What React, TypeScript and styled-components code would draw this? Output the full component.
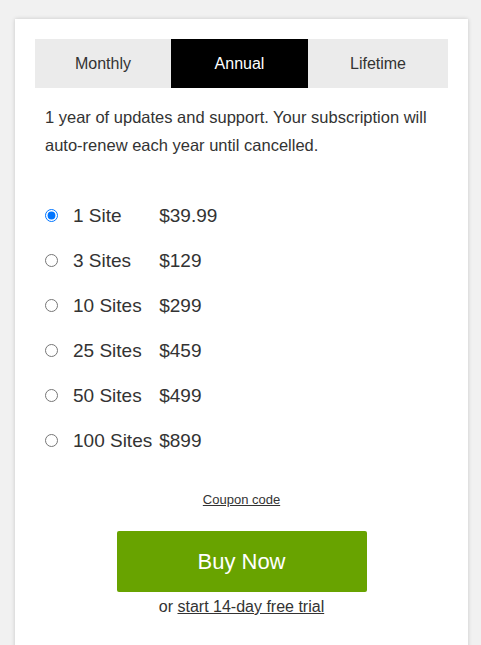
import React, { useState } from "react";
import styled, { createGlobalStyle } from "styled-components";

const Global = createGlobalStyle`
  html, body { margin: 0; padding: 0; background: #f1f1f1; }
  body { font-family: "Liberation Sans", Arial, sans-serif; color: #333; }
`;

const Page = styled.div`
  padding: 19px 13px 0 15px;
`;

const Card = styled.div`
  background: #fff;
  box-shadow: 0 0 4px rgba(0, 0, 0, 0.18);
  padding: 20px 20px 40px;
`;

const Tabs = styled.div`
  display: grid;
  grid-template-columns: 136fr 137fr 140fr;
  background: #ebebeb;
`;

const Tab = styled.button<{ $active?: boolean }>`
  height: 49px;
  border: 0;
  margin: 0;
  padding: 0;
  font-family: "Liberation Sans", Arial, sans-serif;
  font-size: 16px;
  background: ${(p) => (p.$active ? "#000" : "transparent")};
  color: ${(p) => (p.$active ? "#fff" : "#333")};
  cursor: pointer;
`;

const Description = styled.p`
  margin: 15px 0 0;
  padding: 0 10px;
  font-size: 16.5px;
  line-height: 28px;
`;

const Options = styled.table`
  margin: 34px 0 0 10px;
  border-collapse: collapse;
  font-size: 19px;
`;

const Row = styled.tr`
  height: 45px;
`;

const RadioCell = styled.td`
  padding: 0 15px 0 0;
  width: 13px;
  vertical-align: middle;
  line-height: 0;
`;

const Radio = styled.input`
  margin: 0;
  width: 13px;
  height: 13px;
`;

const LabelCell = styled.td`
  padding: 0 7px 0 0;
  white-space: nowrap;
  vertical-align: middle;
`;

const PriceCell = styled.td`
  padding: 0;
  vertical-align: middle;
`;

const Footer = styled.div`
  display: flex;
  flex-direction: column;
  align-items: center;
  margin-top: 27px;
`;

const Coupon = styled.a`
  font-size: 13px;
  line-height: 20px;
  color: #333;
  text-decoration: underline;
`;

const BuyButton = styled.button`
  margin-top: 21px;
  width: 250px;
  height: 61px;
  border: 0;
  border-radius: 2px;
  background: #68a300;
  color: #fff;
  font-family: "Liberation Sans", Arial, sans-serif;
  font-size: 22px;
  cursor: pointer;
`;

const Trial = styled.div`
  margin-top: 5px;
  font-size: 16px;
  line-height: 20px;
  a { color: #333; text-decoration: underline; }
`;

const plans = [
  { label: "1 Site", price: "$39.99" },
  { label: "3 Sites", price: "$129" },
  { label: "10 Sites", price: "$299" },
  { label: "25 Sites", price: "$459" },
  { label: "50 Sites", price: "$499" },
  { label: "100 Sites", price: "$899" },
];

export default function App() {
  const [tab, setTab] = useState("Annual");
  const [sel, setSel] = useState(0);
  return (
    <Page>
      <Global />
      <Card>
        <Tabs>
          {["Monthly", "Annual", "Lifetime"].map((t) => (
            <Tab key={t} $active={tab === t} onClick={() => setTab(t)}>
              {t}
            </Tab>
          ))}
        </Tabs>
        <Description>
          1 year of updates and support. Your subscription will auto-renew each year until cancelled.
        </Description>
        <Options>
          <tbody>
            {plans.map((p, i) => (
              <Row key={p.label}>
                <RadioCell>
                  <Radio type="radio" name="plan" checked={sel === i} onChange={() => setSel(i)} />
                </RadioCell>
                <LabelCell>{p.label}</LabelCell>
                <PriceCell>{p.price}</PriceCell>
              </Row>
            ))}
          </tbody>
        </Options>
        <Footer>
          <Coupon href="#">Coupon code</Coupon>
          <BuyButton>Buy Now</BuyButton>
          <Trial>
            or <a href="#">start 14-day free trial</a>
          </Trial>
        </Footer>
      </Card>
    </Page>
  );
}
